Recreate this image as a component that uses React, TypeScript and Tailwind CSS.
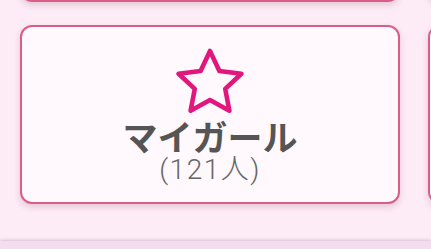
import React from "react";

function StarOutline() {
  return (
    <svg width="72" height="66" viewBox="-36 -36 72 66" className="block">
      <polygon
        points="0,-33 9.4,-12.94 31.39,-10.2 15.22,4.94 19.4,26.7 0,16 -19.4,26.7 -15.22,4.94 -31.39,-10.2 -9.4,-12.94"
        fill="none"
        stroke="#e2177e"
        strokeWidth="4.6"
        strokeLinejoin="round"
      />
    </svg>
  );
}

function Card({ children }: { children?: React.ReactNode }) {
  return (
    <div className="h-[179px] rounded-[12px] border-2 border-[#d85e86] bg-[#fff8fc] shadow-[0_3px_6px_rgba(120,40,80,0.18)] flex flex-col items-center">
      {children}
    </div>
  );
}

export default function App() {
  return (
    <div className="w-[431px] h-[249px] overflow-hidden bg-[#fdebf6] flex flex-col">
      <div className="flex-1 overflow-hidden">
        <div className="grid grid-cols-[380px_380px] gap-x-[28px] gap-y-[23px] pl-[20px] -mt-[177px]">
          <Card />
          <Card />
          <Card>
            <div className="pt-[21px]">
              <StarOutline />
            </div>
            <div className="mt-[5px] text-[35px] leading-[34px] font-bold text-[#555555] [font-family:'Noto_Sans_CJK_JP',sans-serif]">
              マイガール
            </div>
            <div className="mt-[2px] text-[28px] leading-[30px] font-light text-[#666666] tracking-[1.5px] [font-family:Roboto,'Noto_Sans_CJK_JP',sans-serif]">
              (121人)
            </div>
          </Card>
          <Card />
        </div>
      </div>
      <div className="h-[8px] bg-[#f3deef] shadow-[0_-1px_3px_rgba(120,60,100,0.25)]"></div>
    </div>
  );
}
